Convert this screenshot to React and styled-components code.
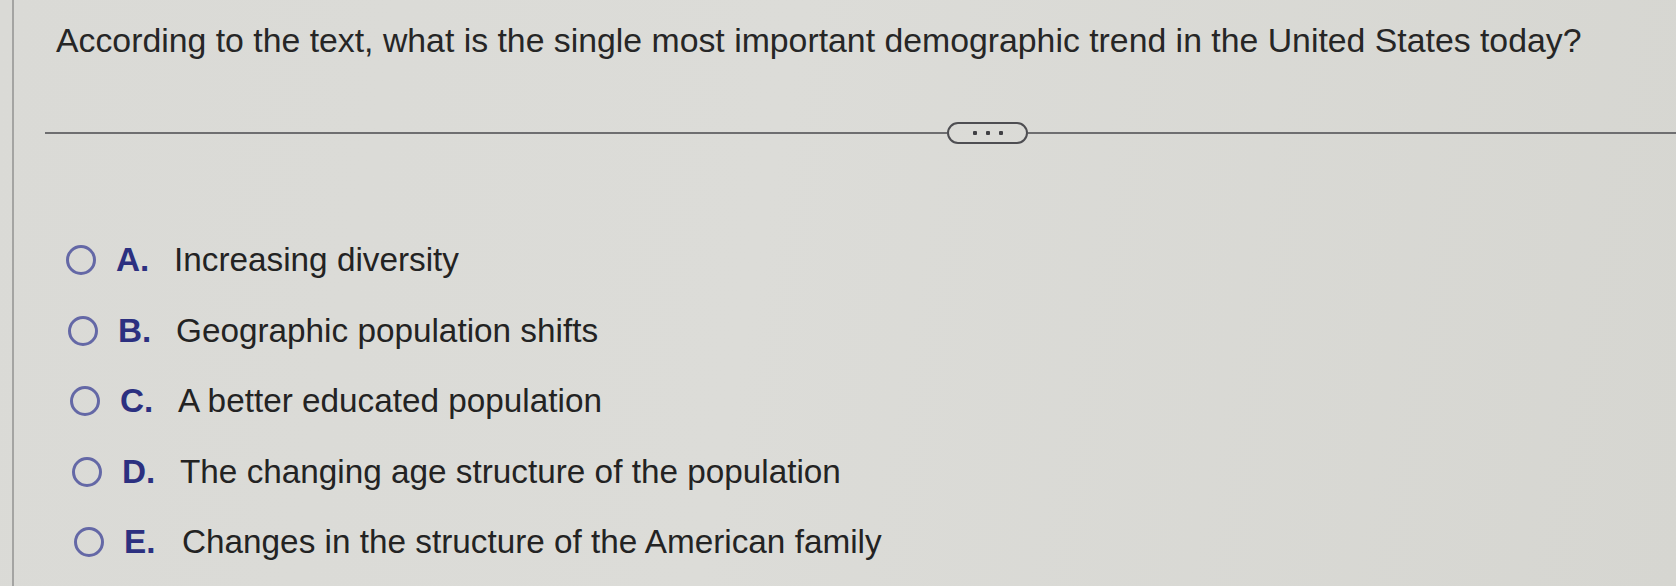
import React from "react"
import styled, { createGlobalStyle } from "styled-components"

const GlobalStyle = createGlobalStyle`
    html, body {
        margin: 0;
        padding: 0;
        background: #d8d8d4;
    }
    body {
        font-family: "Liberation Sans", Arial, sans-serif;
        color: #2a2a2a;
    }
`

const Page = styled.div`
    width: 1676px;
    height: 586px;
    overflow: hidden;
    padding-left: 12px;
    box-sizing: border-box;
    background: linear-gradient(100deg, #dadad6 0%, #dcdcd8 45%, #d6d6d1 100%);
`

const Frame = styled.div`
    height: 100%;
    border-left: 2px solid #a4a4a2;
`

const Question = styled.div`
    padding: 21px 0 0 42px;
    font-size: 33.8px;
    line-height: 38px;
    color: #262626;
`

const Divider = styled.div`
    display: grid;
    grid-template-columns: 902px auto 1fr;
    align-items: center;
    margin: 63px 0 0 31px;
`

const Rule = styled.div`
    height: 2px;
    background: #6e6e70;
`

const MorePill = styled.div`
    width: 81px;
    height: 22px;
    box-sizing: border-box;
    border: 2px solid #4e4e52;
    border-radius: 11px;
    display: flex;
    align-items: center;
    justify-content: center;
    gap: 9px;
`

const Dot = styled.span`
    width: 4px;
    height: 4px;
    background: #404044;
    border-radius: 1px;
`

const Options = styled.div`
    display: flex;
    flex-direction: column;
    padding: 81px 0 0 52px;
`

const Option = styled.label`
    display: flex;
    align-items: center;
    height: 70.5px;
    padding-left: ${p => p.$indent}px;
    font-size: 33.3px;
    cursor: pointer;
`

const Radio = styled.span`
    width: 30px;
    height: 30px;
    box-sizing: border-box;
    border: 3px solid #6468a6;
    border-radius: 50%;
    flex-shrink: 0;
`

const Letter = styled.span`
    width: 58px;
    margin-left: 20px;
    font-weight: bold;
    color: #2c3080;
`

const Answer = styled.span`
    color: #232323;
`

const choices = [
    ["A.", "Increasing diversity"],
    ["B.", "Geographic population shifts"],
    ["C.", "A better educated population"],
    ["D.", "The changing age structure of the population"],
    ["E.", "Changes in the structure of the American family"],
]

export default function App() {
    return (
        <>
            <GlobalStyle/>
            <Page>
                <Frame>
                    <Question>
                        According to the text, what is the single most important demographic trend in the United States today?
                    </Question>
                    <Divider>
                        <Rule/>
                        <MorePill>
                            <Dot/><Dot/><Dot/>
                        </MorePill>
                        <Rule/>
                    </Divider>
                    <Options>
                        {choices.map(([letter, text], i) => (
                            <Option key={letter} $indent={i * 2}>
                                <Radio/>
                                <Letter>{letter}</Letter>
                                <Answer>{text}</Answer>
                            </Option>
                        ))}
                    </Options>
                </Frame>
            </Page>
        </>
    )
}
